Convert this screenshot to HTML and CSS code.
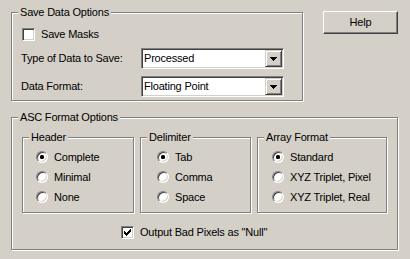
FILE: index.html
```html
<!DOCTYPE html>
<html>
<head>
<meta charset="utf-8">
<link rel="stylesheet" href="styles.css">
</head>
<body>
<div class="dialog">
  <div class="top">
    <div class="group g-save">
      <span class="caption">Save Data Options</span>
      <div class="row row-check">
        <span class="check"></span><span>Save Masks</span>
      </div>
      <div class="row row-field">
        <span class="label">Type of Data to Save:</span>
        <div class="combo">
          <span class="combo-text">Processed</span>
          <span class="combo-btn"><svg width="7" height="4" viewBox="0 0 7 4" shape-rendering="crispEdges"><rect x="0" y="0" width="7" height="1"/><rect x="1" y="1" width="5" height="1"/><rect x="2" y="2" width="3" height="1"/><rect x="3" y="3" width="1" height="1"/></svg></span>
        </div>
      </div>
      <div class="row row-field">
        <span class="label">Data Format:</span>
        <div class="combo">
          <span class="combo-text">Floating Point</span>
          <span class="combo-btn"><svg width="7" height="4" viewBox="0 0 7 4" shape-rendering="crispEdges"><rect x="0" y="0" width="7" height="1"/><rect x="1" y="1" width="5" height="1"/><rect x="2" y="2" width="3" height="1"/><rect x="3" y="3" width="1" height="1"/></svg></span>
        </div>
      </div>
    </div>
    <div class="button">Help</div>
  </div>

  <div class="group g-asc">
    <span class="caption">ASC Format Options</span>
    <div class="subgroups">
      <div class="group sub sub-header">
        <span class="caption">Header</span>
        <div class="opt"><span class="radio on"></span><span>Complete</span></div>
        <div class="opt"><span class="radio"></span><span>Minimal</span></div>
        <div class="opt"><span class="radio"></span><span>None</span></div>
      </div>
      <div class="group sub sub-delim">
        <span class="caption">Delimiter</span>
        <div class="opt"><span class="radio on"></span><span>Tab</span></div>
        <div class="opt"><span class="radio"></span><span>Comma</span></div>
        <div class="opt"><span class="radio"></span><span>Space</span></div>
      </div>
      <div class="group sub sub-array">
        <span class="caption">Array Format</span>
        <div class="opt"><span class="radio on"></span><span>Standard</span></div>
        <div class="opt"><span class="radio"></span><span>XYZ Triplet, Pixel</span></div>
        <div class="opt"><span class="radio"></span><span>XYZ Triplet, Real</span></div>
      </div>
    </div>
    <div class="row row-bad">
      <span class="check"><svg width="7" height="7" viewBox="0 0 7 7" shape-rendering="crispEdges"><rect x="0" y="2" width="1" height="3"/><rect x="1" y="3" width="1" height="3"/><rect x="2" y="4" width="1" height="3"/><rect x="3" y="3" width="1" height="3"/><rect x="4" y="2" width="1" height="3"/><rect x="5" y="1" width="1" height="3"/><rect x="6" y="0" width="1" height="3"/></svg></span>
      <span>Output Bad Pixels as &quot;Null&quot;</span>
    </div>
  </div>
</div>
</body>
</html>
```

FILE: styles.css
```css
html, body {
  margin: 0;
  background: #D4D0C8;
}
body {
  font-family: "Liberation Sans", Arial, sans-serif;
  font-size: 11px;
  line-height: 13px;
  letter-spacing: -0.2px;
  color: #000;
}
.dialog {
  width: 410px;
  height: 259px;
  box-sizing: border-box;
  padding: 11px 0 0 11px;
  overflow: hidden;
}
.top {
  display: flex;
  align-items: flex-start;
}
.group {
  position: relative;
  box-sizing: border-box;
  border: 1px solid #808080;
  box-shadow: inset 1px 1px #fff, 1px 1px #fff;
}
.caption {
  position: absolute;
  top: -7px;
  left: 6px;
  padding: 0 2px;
  background: #D4D0C8;
  white-space: nowrap;
}
.g-save {
  width: 292px;
  height: 89px;
  margin-top: 1px;
  padding: 11px 0 3px 9px;
  display: flex;
  flex-direction: column;
}
.row {
  display: flex;
  align-items: center;
}
.row-check {
  height: 20px;
  padding-left: 1px;
  margin-bottom: 4px;
  gap: 6px;
}
.row-field {
  height: 21px;
}
.row-field + .row-field {
  margin-top: 7px;
}
.label {
  width: 120px;
  flex: none;
}
.combo {
  box-sizing: border-box;
  width: 143px;
  height: 21px;
  padding: 1px;
  border: 1px solid;
  border-color: #808080 #fff #fff #808080;
  box-shadow: inset 1px 1px #404040, inset -1px -1px #D4D0C8;
  background: #fff;
  display: flex;
  align-items: center;
}
.combo-text {
  padding-left: 1px;
  flex: 1;
}
.combo-btn {
  box-sizing: border-box;
  width: 17px;
  height: 17px;
  border: 1px solid;
  border-color: #D4D0C8 #404040 #404040 #D4D0C8;
  box-shadow: inset 1px 1px #fff, inset -1px -1px #808080;
  background: #D4D0C8;
  display: flex;
  align-items: center;
  justify-content: center;
  padding-right: 1px;
}
.combo-btn svg, .check svg {
  display: block;
  fill: #000;
}
.button {
  box-sizing: border-box;
  margin-left: 20px;
  width: 75px;
  height: 23px;
  border: 1px solid;
  border-color: #fff #404040 #404040 #fff;
  box-shadow: inset -1px -1px #808080;
  display: flex;
  align-items: center;
  justify-content: center;
}
.check {
  box-sizing: border-box;
  width: 13px;
  height: 13px;
  flex: none;
  border: 1px solid;
  border-color: #808080 #fff #fff #808080;
  box-shadow: inset 1px 1px #404040, inset -1px -1px #D4D0C8;
  background: #fff;
  display: flex;
  align-items: center;
  justify-content: center;
}
.g-asc {
  width: 387px;
  height: 133px;
  margin-top: 16px;
  padding: 19px 0 0 10px;
}
.subgroups {
  display: flex;
  gap: 6px;
}
.sub {
  height: 76px;
  padding-top: 9px;
}
.sub-header {
  width: 112px;
  padding-left: 13px;
}
.sub-delim {
  width: 111px;
  padding-left: 16px;
}
.sub-array {
  width: 130px;
  padding-left: 14px;
}
.opt {
  display: flex;
  align-items: center;
  height: 20px;
  gap: 6px;
  white-space: nowrap;
}
.radio {
  box-sizing: border-box;
  width: 12px;
  height: 12px;
  flex: none;
  border-radius: 50%;
  border: 1px solid;
  border-color: #808080 #fff #fff #808080;
  box-shadow: inset 1px 1px #404040, inset -1px -1px #D4D0C8;
  background: #fff;
  display: flex;
  align-items: center;
  justify-content: center;
}
.radio.on::after {
  content: "";
  width: 4px;
  height: 4px;
  border-radius: 1.5px;
  background: #000;
}
.row-bad {
  margin: 9px 0 0 99px;
  height: 20px;
  gap: 6px;
}
```
